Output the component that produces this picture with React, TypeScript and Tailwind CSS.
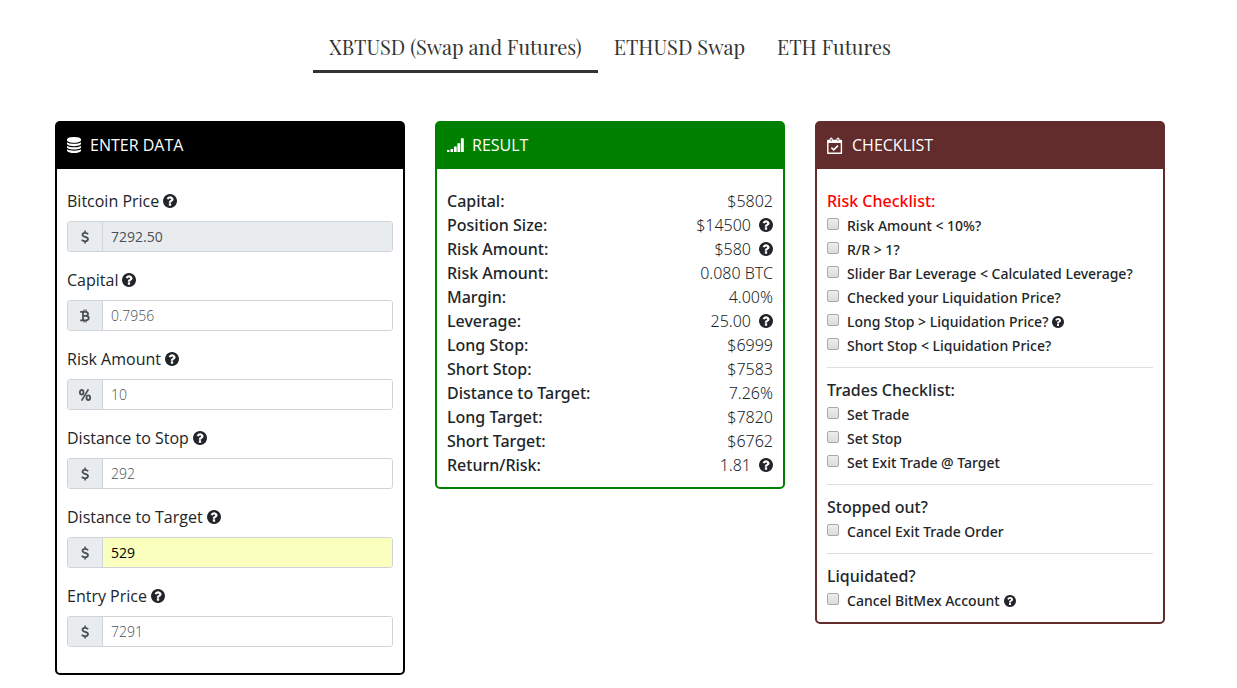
import React, { useState } from "react"

interface IconProps {
  className?: string
}

function QuestionIcon({ className }: IconProps) {
  return (
    <svg viewBox="128 128 1536 1536" fill="currentColor" className={className} aria-hidden="true">
      <path d="M1024 1376v-192q0-14-9-23t-23-9h-192q-14 0-23 9t-9 23v192q0 14 9 23t23 9h192q14 0 23-9t9-23zm256-672q0-88-55.5-163t-138.5-116-170-41q-243 0-371 213-15 24 8 42l132 100q7 6 19 6 16 0 25-12 53-68 86-92 34-24 86-24 48 0 85.5 26t37.5 59q0 38-20 61t-68 45q-63 28-115.5 86.5t-52.5 125.5v36q0 14 9 23t23 9h192q14 0 23-9t9-23q0-19 21.5-49.5t54.5-49.5q32-18 49-28.5t46-35 44.5-48 28-60.5 12.5-81zm384 192q0 209-103 385.5t-279.5 279.5-385.5 103-385.5-103-279.5-279.5-103-385.5 103-385.5 279.5-279.5 385.5-103 385.5 103 279.5 279.5 103 385.5z" />
    </svg>
  )
}

function DatabaseIcon() {
  return (
    <svg viewBox="128 0 1640 1792" fill="currentColor" className="h-4 w-[15px]" aria-hidden="true" preserveAspectRatio="none">
      <path d="M896 768q237 0 443-43t325-127v170q0 69-103 128t-280 93.5-385 34.5-385-34.5-280-93.5-103-128v-170q119 84 325 127t443 43zm0 768q237 0 443-43t325-127v170q0 69-103 128t-280 93.5-385 34.5-385-34.5-280-93.5-103-128v-170q119 84 325 127t443 43zm0-384q237 0 443-43t325-127v170q0 69-103 128t-280 93.5-385 34.5-385-34.5-280-93.5-103-128v-170q119 84 325 127t443 43zm0-1152q208 0 385 34.5t280 93.5 103 128v128q0 69-103 128t-280 93.5-385 34.5-385-34.5-280-93.5-103-128v-128q0-69 103-128t280-93.5 385-34.5z" />
    </svg>
  )
}

function SignalIcon() {
  return (
    <svg viewBox="0 0 17 16" fill="currentColor" className="h-4 w-[17px]" aria-hidden="true">
      <rect x="0" y="13" width="2.4" height="2" rx="0.3" />
      <rect x="3.5" y="12" width="2.6" height="3" rx="0.3" />
      <rect x="7" y="9.6" width="2.7" height="5.4" rx="0.3" />
      <rect x="10.4" y="6.2" width="2.8" height="8.8" rx="0.3" />
      <rect x="13.9" y="1.2" width="2.9" height="13.8" rx="0.3" />
    </svg>
  )
}

function CalendarIcon() {
  return (
    <svg viewBox="0 0 17 17" fill="none" stroke="currentColor" className="size-[17px]" aria-hidden="true">
      <path d="M.8 3.4h13.6v12.8H.8z" strokeWidth="1.4" strokeLinejoin="round" />
      <path d="M.8 3h13.6v3H.8z" fill="currentColor" stroke="none" />
      <path d="M4.2 1.9v2.4M11 1.9v2.4" strokeWidth="3" strokeLinecap="round" />
      <path d="M4.2 1.8v2.4M11 1.8v2.4" stroke="#622c2c" strokeWidth="0.8" />
      <path d="M4.4 10.6l2.3 2.3 4.3-4.3" strokeWidth="1.6" />
    </svg>
  )
}

function DollarIcon() {
  return (
    <svg viewBox="0 0 8 14" fill="none" stroke="currentColor" className="h-3.5 w-2" aria-hidden="true">
      <path d="M7.1 4.2C6.4 3.3 5.4 2.8 4.2 2.8 2.6 2.8 1.5 3.5 1.5 4.7c0 2.8 5.5 1.5 5.5 4.4 0 1.4-1.2 2.2-2.9 2.2-1.3 0-2.5-.5-3.3-1.5" strokeWidth="1.8" />
      <path d="M4.1.4v2.4M4.1 11v2.6" strokeWidth="1.6" />
    </svg>
  )
}

function BitcoinIcon() {
  return (
    <svg viewBox="0 0 10 14" fill="none" stroke="currentColor" className="h-3.5 w-2.5" aria-hidden="true">
      <path d="M.2 2.8H5.4c1.5 0 2.6.7 2.6 2S7 6.9 5.6 6.9H3M5.6 6.9c1.9 0 3.2.7 3.2 2.2s-1.3 2.2-3.2 2.2H.2M3 3v8" strokeWidth="1.8" />
      <path d="M4 .6v2.4M6 .6v2.4M4 11v2.4M6 11v2.4" strokeWidth="1.2" />
    </svg>
  )
}

function PercentIcon() {
  return (
    <svg viewBox="0 0 12 12" fill="none" stroke="currentColor" className="size-3" aria-hidden="true">
      <ellipse cx="2.7" cy="3.3" rx="1.8" ry="2.3" strokeWidth="1.8" />
      <ellipse cx="9.3" cy="8.7" rx="1.8" ry="2.3" strokeWidth="1.8" />
      <path d="M9.4.4L2.6 11.6" strokeWidth="1.7" />
    </svg>
  )
}

const tabs = ["XBTUSD (Swap and Futures)", "ETHUSD Swap", "ETH Futures"]

const fields = [
  { id: "price", label: "Bitcoin Price", value: "7292.50", icon: <DollarIcon />, look: "bg-[#e9ecef] text-[#495057] font-normal", readOnly: true },
  { id: "capital", label: "Capital", value: "0.7956", icon: <BitcoinIcon />, look: "bg-white text-[#495057] font-light" },
  { id: "risk", label: "Risk Amount", value: "10", icon: <PercentIcon />, look: "bg-white text-[#495057] font-light" },
  { id: "stop", label: "Distance to Stop", value: "292", icon: <DollarIcon />, look: "bg-white text-[#495057] font-light" },
  { id: "target", label: "Distance to Target", value: "529", icon: <DollarIcon />, look: "bg-[#faffbd] text-black font-normal" },
  { id: "entry", label: "Entry Price", value: "7291", icon: <DollarIcon />, look: "bg-white text-[#495057] font-light" },
]

const results = [
  { label: "Capital:", value: "$5802" },
  { label: "Position Size:", value: "$14500", help: true },
  { label: "Risk Amount:", value: "$580", help: true },
  { label: "Risk Amount:", value: "0.080 BTC" },
  { label: "Margin:", value: "4.00%" },
  { label: "Leverage:", value: "25.00", help: true },
  { label: "Long Stop:", value: "$6999" },
  { label: "Short Stop:", value: "$7583" },
  { label: "Distance to Target:", value: "7.26%" },
  { label: "Long Target:", value: "$7820" },
  { label: "Short Target:", value: "$6762" },
  { label: "Return/Risk:", value: "1.81", help: true },
]

const checklist = [
  {
    title: "Risk Checklist:",
    color: "text-[#ff0000]",
    items: [
      { text: "Risk Amount < 10%?" },
      { text: "R/R > 1?" },
      { text: "Slider Bar Leverage < Calculated Leverage?" },
      { text: "Checked your Liquidation Price?" },
      { text: "Long Stop > Liquidation Price?", help: true },
      { text: "Short Stop < Liquidation Price?" },
    ],
  },
  {
    title: "Trades Checklist:",
    color: "",
    items: [{ text: "Set Trade" }, { text: "Set Stop" }, { text: "Set Exit Trade @ Target" }],
  },
  { title: "Stopped out?", color: "", items: [{ text: "Cancel Exit Trade Order" }] },
  { title: "Liquidated?", color: "", items: [{ text: "Cancel BitMex Account", help: true }] },
]

interface CardProps {
  title: string
  icon: React.ReactNode
  border: string
  header: string
  children: React.ReactNode
}

function Card({ title, icon, border, header, children }: CardProps) {
  return (
    <section className={`rounded-[5px] border-2 ${border}`}>
      <h2 className={`flex h-[46px] items-center gap-2 px-2.5 pb-0.5 font-['Open_Sans',sans-serif] text-base font-normal text-white ${header}`}>
        {icon}
        {title}
      </h2>
      <div className="px-2.5 pt-5 pb-2.5">{children}</div>
    </section>
  )
}

export default function App() {
  const [activeTab, setActiveTab] = useState(0)

  return (
    <div className="bg-white pr-[17px] font-['Noto_Sans','Open_Sans',sans-serif] text-base text-[#212529]">
      <nav className="flex flex-wrap justify-center pt-6 font-['Playfair_Display','Liberation_Serif',serif] text-xl leading-[46px] text-[#333333]">
        {tabs.map((tab, i) => (
          <button
            key={tab}
            onClick={() => setActiveTab(i)}
            className={`cursor-pointer border-b-3 px-4 ${i === activeTab ? "border-[#333333]" : "border-transparent"}`}
          >
            {tab}
          </button>
        ))}
      </nav>

      <main className="mx-auto mt-12 grid max-w-[1140px] grid-cols-1 items-start gap-[30px] px-[15px] md:grid-cols-3">
        <Card title="ENTER DATA" icon={<DatabaseIcon />} border="border-black" header="bg-black">
          {fields.map((field) => (
            <div key={field.id} className="mb-4 font-['Open_Sans','Noto_Sans',sans-serif]">
              <div className="mb-2 flex items-center gap-1">
                <label htmlFor={field.id}>{field.label}</label>
                <QuestionIcon className="size-3.5" />
              </div>
              <div className="flex h-[31px] overflow-hidden rounded-[3px] border border-[#ced4da]">
                <span className="flex w-[35px] shrink-0 items-center justify-center border-r border-[#ced4da] bg-[#e9ecef] text-[#495057]">
                  {field.icon}
                </span>
                <input
                  id={field.id}
                  type="text"
                  defaultValue={field.value}
                  readOnly={field.readOnly}
                  className={`min-w-0 flex-1 px-2 text-sm outline-none ${field.look}`}
                />
              </div>
            </div>
          ))}
        </Card>

        <Card title="RESULT" icon={<SignalIcon />} border="border-[#008000]" header="bg-[#008000]">
          <table className="w-full">
            <tbody>
              {results.map((row, i) => (
                <tr key={i} className="h-6">
                  <th scope="row" className="p-0 text-left font-medium">{row.label}</th>
                  <td className="p-0 font-light">
                    <div className="flex items-center justify-end gap-2">
                      {row.value}
                      {row.help && <QuestionIcon className="size-3.5" />}
                    </div>
                  </td>
                </tr>
              ))}
            </tbody>
          </table>
        </Card>

        <Card title="CHECKLIST" icon={<CalendarIcon />} border="border-[#622c2c]" header="bg-[#622c2c]">
          {checklist.map((group, i) => (
            <div
              key={group.title}
              className={`font-medium ${i > 0 ? "mt-2.5 border-t border-[#dfdfdf] pt-2.5" : ""}`}
            >
              <h3 className={`text-base font-medium ${group.color}`}>{group.title}</h3>
              {group.items.map((item) => (
                <div key={item.text} className="flex h-6 items-center gap-1 pt-0.5">
                  <label className="flex items-center gap-2 text-sm leading-6">
                    <input
                      type="checkbox"
                      className="mb-1 size-3 appearance-none rounded-[2px] border border-[#a9a9a9] bg-linear-to-b from-[#ededed] to-[#dcdcdc] checked:from-[#6b7280] checked:to-[#4b5563]"
                    />
                    {item.text}
                  </label>
                  {item.help && <QuestionIcon className="size-3" />}
                </div>
              ))}
            </div>
          ))}
        </Card>
      </main>
    </div>
  )
}
